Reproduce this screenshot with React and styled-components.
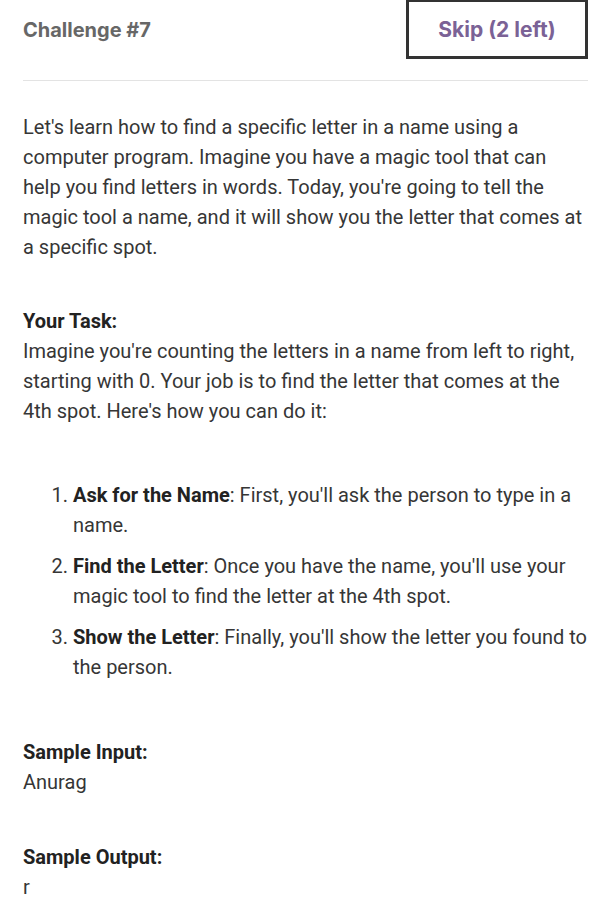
import React from "react";
import styled, { createGlobalStyle } from "styled-components";

const GlobalStyle = createGlobalStyle`
  body {
    margin: 0;
    background: #ffffff;
    font-family: Roboto, "Liberation Sans", sans-serif;
  }
`;

const Page = styled.div`
  padding: 0 6px 0 23px;
  color: #363636;
`;

const Header = styled.div`
  display: flex;
  align-items: center;
  justify-content: space-between;
  height: 60px;
  padding-bottom: 20px;
  border-bottom: 1px solid #e3e3e3;
`;

const Title = styled.h2`
  margin: 0;
  font-family: Inter, "Liberation Sans", sans-serif;
  font-size: 20px;
  font-weight: 700;
  color: #676767;
`;

const SkipButton = styled.button`
  box-sizing: border-box;
  width: 182px;
  height: 60px;
  margin-top: -2px;
  background: #ffffff;
  border: 3px solid #333333;
  font-family: Inter, "Liberation Sans", sans-serif;
  font-size: 21px;
  font-weight: 700;
  color: #7b6296;
  cursor: pointer;
`;

const Body = styled.div`
  font-size: 20px;
  line-height: 30px;
  padding-top: 31px;
`;

const Para = styled.p`
  margin: 0 0 ${(p) => p.$gap ?? 44}px;
`;

const Label = styled.strong`
  display: block;
  font-weight: 700;
  color: #222222;
`;

const Steps = styled.ol`
  margin: 0 0 55px;
  padding-left: 50px;
`;

const Step = styled.li`
  margin-bottom: 11px;
  &:last-child {
    margin-bottom: 0;
  }
  strong {
    color: #222222;
  }
`;

export default function App() {
  return (
    <>
      <GlobalStyle />
      <Page>
        <Header>
          <Title>Challenge #7</Title>
          <SkipButton>Skip (2 left)</SkipButton>
        </Header>
        <Body>
          <Para>
            Let's learn how to find a specific letter in a name using a computer
            program. Imagine you have a magic tool that can help you find letters
            in words. Today, you're going to tell the magic tool a name, and it
            will show you the letter that comes at a specific spot.
          </Para>
          <Para $gap={54}>
            <Label>Your Task:</Label>
            Imagine you're counting the letters in a name from left to right,
            starting with 0. Your job is to find the letter that comes at the 4th
            spot. Here's how you can do it:
          </Para>
          <Steps>
            <Step>
              <strong>Ask for the Name</strong>: First, you'll ask the person to
              type in a name.
            </Step>
            <Step>
              <strong>Find the Letter</strong>: Once you have the name, you'll use
              your magic tool to find the letter at the 4th spot.
            </Step>
            <Step>
              <strong>Show the Letter</strong>: Finally, you'll show the letter you
              found to the person.
            </Step>
          </Steps>
          <Para $gap={45}>
            <Label>Sample Input:</Label>
            Anurag
          </Para>
          <Para $gap={0}>
            <Label>Sample Output:</Label>r
          </Para>
        </Body>
      </Page>
    </>
  );
}
